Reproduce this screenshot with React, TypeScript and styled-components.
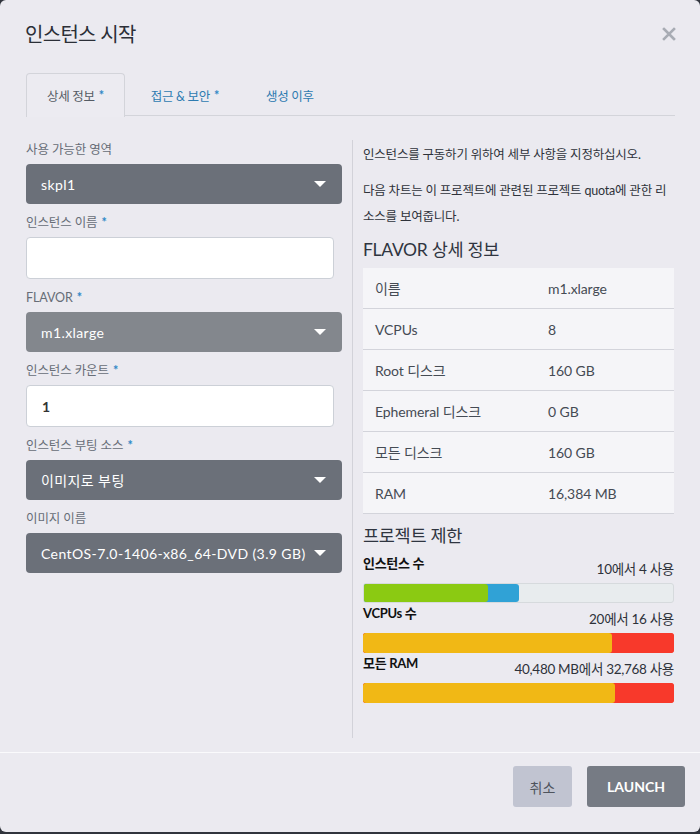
import React from "react";
import styled, { createGlobalStyle } from "styled-components";

const GlobalStyle = createGlobalStyle`
  html, body { margin: 0; padding: 0; }
  body {
    background: #30343c;
    font-family: "Lato", "Noto Sans CJK KR", sans-serif;
    color: #333;
  }
  * { box-sizing: border-box; }
`;

const Dialog = styled.div`
  width: 700px;
  height: 832px;
  background: #ebeaf0;
  border-radius: 6px;
  display: flex;
  flex-direction: column;
  overflow: hidden;
`;

const Header = styled.div`
  display: flex;
  justify-content: space-between;
  align-items: center;
  padding: 21px 24px 0 25px;
  height: 47px;
`;

const Title = styled.h4`
  margin: 0;
  font-size: 20px;
  font-weight: 400;
  line-height: 26px;
  color: #2b2f37;
  letter-spacing: -0.7px;
`;

const CloseButton = styled.button`
  border: none;
  background: none;
  padding: 0;
  width: 14px;
  height: 14px;
  display: flex;
  cursor: pointer;
`;

const TabBar = styled.div`
  display: flex;
  margin: 26px 25px 0 26px;
  border-bottom: 1px solid #d3d4da;
  height: 43px;
`;

const Tab = styled.div<{ $active?: boolean }>`
  padding: 0 20px;
  margin-right: 5px;
  display: flex;
  align-items: center;
  font-size: 12.5px;
  letter-spacing: -0.3px;
  color: ${(p) => (p.$active ? "#555b64" : "#2e7bb0")};
  border: 1px solid ${(p) => (p.$active ? "#d3d4da" : "transparent")};
  border-bottom: none;
  border-radius: 4px 4px 0 0;
  background: ${(p) => (p.$active ? "#ecebf1" : "transparent")};
  margin-bottom: -1px;
  height: 44px;
`;

const Star = styled.span`
  color: #2e88c6;
  margin-left: 4px;
  font-weight: 700;
`;

const Body = styled.div`
  display: grid;
  grid-template-columns: 327px 1fr;
  padding: 24px 26px 0 26px;
  height: 622px;
`;

const LeftCol = styled.div`
  padding-right: 10px;
  border-right: 1px solid #d2d2d9;
`;

const RightCol = styled.div`
  padding-left: 10px;
`;

const Field = styled.div`
  margin-bottom: 9px;
`;

const Label = styled.div`
  font-size: 12.5px;
  line-height: 20px;
  color: #676d77;
  margin-bottom: 4px;
  letter-spacing: -0.1px;
`;

const Select = styled.div<{ $light?: boolean }>`
  height: 40px;
  border-radius: 4px;
  background: ${(p) => (p.$light ? "#83878d" : "#6b7079")};
  color: #fff;
  font-size: 14px;
  display: flex;
  align-items: center;
  justify-content: space-between;
  padding: 0 16px 0 15px;
  letter-spacing: 0.4px;
`;

const Caret = styled.span`
  width: 0;
  height: 0;
  border-left: 6px solid transparent;
  border-right: 6px solid transparent;
  border-top: 6px solid #fff;
`;

const Input = styled.div`
  height: 42px;
  width: calc(100% - 8px);
  background: #fff;
  border: 1px solid #ccd0d7;
  border-radius: 4px;
  display: flex;
  align-items: center;
  padding: 0 15px;
  font-size: 14px;
  font-weight: 700;
  color: #333;
`;

const Para = styled.p`
  margin: 2px 0 10px;
  font-size: 12.5px;
  line-height: 26px;
  color: #2e323a;
  letter-spacing: -0.2px;
`;

const SectionTitle = styled.h5`
  margin: 0 0 8px;
  font-size: 17.5px;
  line-height: 20px;
  font-weight: 400;
  color: #2f3540;
  letter-spacing: -0.3px;
`;

const Table = styled.div`
  display: flex;
  flex-direction: column;
  margin-bottom: 12px;
`;

const Row = styled.div`
  display: grid;
  grid-template-columns: 173px 1fr;
  height: 41px;
  align-items: center;
  background: #f5f5f8;
  border-bottom: 1px solid #d3d4db;
  padding-left: 12px;
  font-size: 14px;
  color: #454b54;
  letter-spacing: -0.1px;
`;

const QuotaHead = styled.div`
  display: flex;
  justify-content: space-between;
  height: 26px;
  font-size: 13.5px;
  line-height: 18px;
  letter-spacing: -0.3px;
`;

const QuotaLabel = styled.strong`
  align-self: flex-start;
  color: #111;
  font-weight: 700;
  font-size: 13px;
`;

const QuotaCount = styled.span`
  align-self: flex-end;
  margin-bottom: 2px;
  color: #2e323a;
`;

const Bar = styled.div<{ $track: string }>`
  height: 20px;
  margin: 3px 0 1px;
  border-radius: 3px;
  overflow: hidden;
  display: flex;
  background: ${(p) => p.$track};
  border: ${(p) => (p.$track === "#e8ecee" ? "1px solid #d6dadd" : "none")};
`;

const Segment = styled.div<{ $color: string }>`
  height: 100%;
  display: flex;
  background: ${(p) => p.$color};
  border-radius: 0 3px 3px 0;
`;

const QuotaSection = styled.div`
  margin-top: 6px;
`;

const Footer = styled.div`
  margin-top: 14px;
  border-top: 1px solid #fafafc;
  display: flex;
  justify-content: flex-end;
  gap: 15px;
  padding: 13px 15px 0 0;
`;

const Button = styled.button<{ $primary?: boolean }>`
  height: 41px;
  border: none;
  border-radius: 3px;
  padding: 0 ${(p) => (p.$primary ? "18px" : "14px")};
  font-family: inherit;
  font-size: 14px;
  font-weight: ${(p) => (p.$primary ? 700 : 400)};
  color: ${(p) => (p.$primary ? "#fff" : "#4f545d")};
  background: ${(p) => (p.$primary ? "#767b84" : "#c1c4d1")};
  min-width: ${(p) => (p.$primary ? "98px" : "59px")};
`;

const flavor = [
  ["이름", "m1.xlarge"],
  ["VCPUs", "8"],
  ["Root 디스크", "160 GB"],
  ["Ephemeral 디스크", "0 GB"],
  ["모든 디스크", "160 GB"],
  ["RAM", "16,384 MB"],
];

type Quota = {
  label: string;
  count: string;
  used: number;
  added: number;
  total: number;
  usedColor: string;
  addColor: string;
  track: string;
};

const quotas: Quota[] = [
  { label: "인스턴스 수", count: "10에서 4 사용", used: 4, added: 1, total: 10, usedColor: "#8bca12", addColor: "#30a2d6", track: "#e8ecee" },
  { label: "VCPUs 수", count: "20에서 16 사용", used: 16, added: 4, total: 20, usedColor: "#f1b815", addColor: "#f8392b", track: "#f8392b" },
  { label: "모든 RAM", count: "40,480 MB에서 32,768 사용", used: 32768, added: 7712, total: 40480, usedColor: "#f1b815", addColor: "#f8392b", track: "#f8392b" },
];

export default function App() {
  return (
    <>
      <GlobalStyle />
      <Dialog>
        <Header>
          <Title>인스턴스 시작</Title>
          <CloseButton aria-label="close">
            <svg width="14" height="14" viewBox="0 0 14 14">
              <path d="M2 2 L12 12 M12 2 L2 12" stroke="#a8acb4" strokeWidth="2.6" strokeLinecap="square" />
            </svg>
          </CloseButton>
        </Header>
        <TabBar>
          <Tab $active>
            상세 정보<Star>*</Star>
          </Tab>
          <Tab>
            접근 &amp; 보안<Star>*</Star>
          </Tab>
          <Tab>생성 이후</Tab>
        </TabBar>
        <Body>
          <LeftCol>
            <Field>
              <Label>사용 가능한 영역</Label>
              <Select>
                skpl1
                <Caret />
              </Select>
            </Field>
            <Field>
              <Label>
                인스턴스 이름<Star>*</Star>
              </Label>
              <Input />
            </Field>
            <Field>
              <Label>
                FLAVOR<Star>*</Star>
              </Label>
              <Select $light>
                m1.xlarge
                <Caret />
              </Select>
            </Field>
            <Field>
              <Label>
                인스턴스 카운트<Star>*</Star>
              </Label>
              <Input>1</Input>
            </Field>
            <Field>
              <Label>
                인스턴스 부팅 소스<Star>*</Star>
              </Label>
              <Select>
                이미지로 부팅
                <Caret />
              </Select>
            </Field>
            <Field>
              <Label>이미지 이름</Label>
              <Select>
                CentOS-7.0-1406-x86_64-DVD (3.9 GB)
                <Caret />
              </Select>
            </Field>
          </LeftCol>
          <RightCol>
            <Para>인스턴스를 구동하기 위하여 세부 사항을 지정하십시오.</Para>
            <Para>다음 차트는 이 프로젝트에 관련된 프로젝트 quota에 관한 리소스를 보여줍니다.</Para>
            <SectionTitle>FLAVOR 상세 정보</SectionTitle>
            <Table>
              {flavor.map(([k, v]) => (
                <Row key={k}>
                  <span>{k}</span>
                  <span>{v}</span>
                </Row>
              ))}
            </Table>
            <SectionTitle>프로젝트 제한</SectionTitle>
            <QuotaSection>
              {quotas.map((q) => (
                <div key={q.label}>
                  <QuotaHead>
                    <QuotaLabel>{q.label}</QuotaLabel>
                    <QuotaCount>{q.count}</QuotaCount>
                  </QuotaHead>
                  <Bar $track={q.track}>
                    <Segment $color={q.addColor} style={{ width: `${((q.used + q.added) / q.total) * 100}%` }}>
                      <Segment $color={q.usedColor} style={{ width: `${(q.used / (q.used + q.added)) * 100}%` }} />
                    </Segment>
                  </Bar>
                </div>
              ))}
            </QuotaSection>
          </RightCol>
        </Body>
        <Footer>
          <Button>취소</Button>
          <Button $primary>LAUNCH</Button>
        </Footer>
      </Dialog>
    </>
  );
}
